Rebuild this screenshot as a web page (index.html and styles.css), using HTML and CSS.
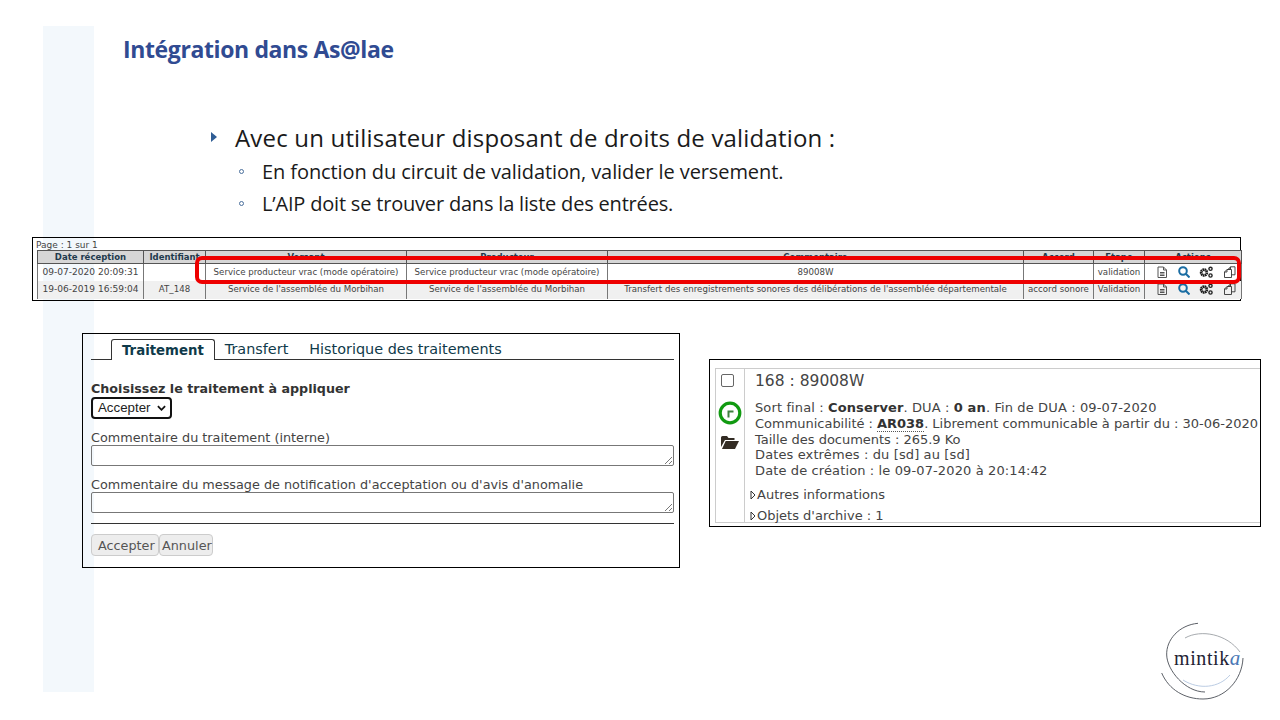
FILE: index.html
```html
<!DOCTYPE html>
<html lang="fr">
<head>
<meta charset="utf-8">
<title>Intégration dans As@lae</title>
<link rel="stylesheet" href="styles.css">
</head>
<body>
<main class="slide">
  <div class="band"></div>
  <h1 class="title">Intégration dans As@lae</h1>
  <section class="bullets">
    <div class="lvl1"><svg class="tri" viewBox="0 0 6 10"><path d="M0 0L6 5L0 10Z"/></svg><span>Avec un utilisateur disposant de droits de validation :</span></div>
    <div class="lvl2"><span class="ring"></span><span>En fonction du circuit de validation, valider le versement.</span></div>
    <div class="lvl2 last"><span class="ring"></span><span>L’AIP doit se trouver dans la liste des entrées.</span></div>
  </section>

  <section class="listing">
    <div class="page">Page : 1 sur 1</div>
    <table class="grid">
      <colgroup>
        <col class="c1"><col class="c2"><col class="c3"><col class="c4"><col class="c5"><col class="c6"><col class="c7"><col class="c8">
      </colgroup>
      <thead>
        <tr><th>Date réception</th><th>Identifiant</th><th>Versant</th><th>Producteur</th><th>Commentaire</th><th>Accord</th><th>Etape</th><th>Actions</th></tr>
      </thead>
      <tbody>
        <tr>
          <td class="when">09-07-2020 20:09:31</td><td></td><td>Service producteur vrac (mode opératoire)</td><td>Service producteur vrac (mode opératoire)</td><td>89008W</td><td></td><td>validation</td>
          <td><div class="acts">
            <svg viewBox="0 0 12 12"><path class="doc" d="M2 1H7.500L10.500 4V11.500H2ZM7.500 1V4H10.500M4 6.500H8.500M4 8H8.500M4 9.500H8.500"/></svg>
            <svg viewBox="0 0 12 12"><circle class="lens" cx="5" cy="5" r="3.800"/><path class="lens" d="M7.800 7.800L11.500 11.500"/></svg>
            <svg class="gears" viewBox="0 0 14 12"><circle class="gear" cx="5" cy="6.500" r="2.800"/><circle class="gear2" cx="11.500" cy="2.800" r="1.600"/><circle class="gear2" cx="11.500" cy="9.500" r="1.600"/></svg>
            <svg class="copies" viewBox="0 0 13 12"><path class="copy" d="M5.500 3.500V3L7.500 0.800H12V8.800H8.500M1.500 6L4 3.500H8.500V11.500H1.500ZM4 3.500V6H1.500M7.500 0.800V3H5.500"/></svg>
          </div></td>
        </tr>
        <tr class="alt">
          <td class="when">19-06-2019 16:59:04</td><td>AT_148</td><td>Service de l'assemblée du Morbihan</td><td>Service de l'assemblée du Morbihan</td><td>Transfert des enregistrements sonores des délibérations de l'assemblée départementale</td><td>accord sonore</td><td>Validation</td>
          <td><div class="acts">
            <svg viewBox="0 0 12 12"><path class="doc" d="M2 1H7.500L10.500 4V11.500H2ZM7.500 1V4H10.500M4 6.500H8.500M4 8H8.500M4 9.500H8.500"/></svg>
            <svg viewBox="0 0 12 12"><circle class="lens" cx="5" cy="5" r="3.800"/><path class="lens" d="M7.800 7.800L11.500 11.500"/></svg>
            <svg class="gears" viewBox="0 0 14 12"><circle class="gear" cx="5" cy="6.500" r="2.800"/><circle class="gear2" cx="11.500" cy="2.800" r="1.600"/><circle class="gear2" cx="11.500" cy="9.500" r="1.600"/></svg>
            <svg class="copies" viewBox="0 0 13 12"><path class="copy" d="M5.500 3.500V3L7.500 0.800H12V8.800H8.500M1.500 6L4 3.500H8.500V11.500H1.500ZM4 3.500V6H1.500M7.500 0.800V3H5.500"/></svg>
          </div></td>
        </tr>
      </tbody>
    </table>
  </section>
  <div class="highlight"></div>

  <section class="form">
    <nav class="tabs">
      <span class="tab active">Traitement</span>
      <span class="tab">Transfert</span>
      <span class="tab">Historique des traitements</span>
    </nav>
    <div class="fields">
      <div class="choose">Choisissez le traitement à appliquer</div>
      <div class="select"><span>Accepter</span><svg viewBox="0 0 10 6"><path d="M1 1L5 5L9 1"/></svg></div>
      <label class="lab">Commentaire du traitement (interne)</label>
      <div class="area"><svg viewBox="0 0 8 8"><path d="M1 8L8 1M5 8L8 5"/></svg></div>
      <label class="lab">Commentaire du message de notification d'acceptation ou d'avis d'anomalie</label>
      <div class="area"><svg viewBox="0 0 8 8"><path d="M1 8L8 1M5 8L8 5"/></svg></div>
    </div>
    <div class="buttons"><span class="btn b1">Accepter</span><span class="btn b2">Annuler</span></div>
  </section>

  <section class="detail">
    <div class="card">
      <aside class="side">
        <span class="check"></span>
        <svg class="stamp" viewBox="0 0 24 24"><circle cx="12" cy="12" r="9.800"/><path d="M10.500 16.500V10.500H15.500"/></svg>
        <svg class="folder" viewBox="0 0 18 14"><path d="M0 2.500Q0 1 1.500 1H6L7.500 3H13.500V5H4L0 12ZM1 14L4.700 6H18L14 14Z"/></svg>
      </aside>
      <div class="info">
        <div class="name">168 : 89008W</div>
        <div class="meta">
          <div>Sort final : <b>Conserver</b>. DUA : <b>0 an</b>. Fin de DUA : 09-07-2020</div>
          <div class="tight">Communicabilité : <b class="dot">AR038</b>. Librement communicable à partir du : 30-06-2020</div>
          <div class="tight">Taille des documents : 265.9 Ko</div>
          <div>Dates extrêmes : du [sd] au [sd]</div>
          <div>Date de création : le 09-07-2020 à 20:14:42</div>
        </div>
        <div class="fold one"><svg viewBox="0 0 6 10"><path d="M1 1L5 5L1 9Z"/></svg>Autres informations</div>
        <div class="fold two"><svg viewBox="0 0 6 10"><path d="M1 1L5 5L1 9Z"/></svg>Objets d'archive : 1</div>
      </div>
    </div>
  </section>

  <div class="logo">
    <svg viewBox="0 0 90 85">
      <path class="a1" d="M37 1.300C18 3 5 18 5.700 33C6 48 24 70 44 70"/>
      <path class="a1" d="M0.700 51C8 68 24 77 42 77C64 77 81 58 82 36"/>
      <path class="a2" d="M24 16C40 7 66 12 79 30"/>
      <path class="a4" d="M22 58C38 68 58 66 69 53"/>
    </svg>
    <span class="word">mintik<i>a</i></span>
  </div>
</main>
</body>
</html>
```
FILE: styles.css
```css
* { box-sizing: border-box; }
html, body { margin: 0; padding: 0; background: #fff; }
.slide { position: relative; width: 1280px; height: 720px; overflow: hidden; background: #fff; font-family: "Open Sans", sans-serif; }
.band { position: absolute; left: 43px; top: 26px; width: 51px; height: 666px; background: #f3f8fc; }
.title { position: absolute; left: 123px; top: 32px; margin: 0; font: 700 23px/34px "Open Sans", sans-serif; letter-spacing: -0.38px; color: #304b92; white-space: nowrap; }

.bullets { position: absolute; left: 211px; top: 120px; color: #1a1a1a; }
.lvl1 { display: flex; align-items: center; height: 36px; padding-bottom: 2px; font-size: 24px; letter-spacing: 0.18px; white-space: nowrap; }
.tri { width: 6px; height: 10px; margin-right: 18px; fill: #2f5d95; }
.lvl2 { display: flex; align-items: center; height: 31px; margin-left: 28px; font-size: 20px; letter-spacing: -0.09px; white-space: nowrap; }
.lvl2.last { margin-top: 1px; letter-spacing: -0.19px; }
.ring { width: 5px; height: 5px; margin-right: 18px; border: 1px solid #4a6f9c; border-radius: 50%; }

.listing { position: absolute; left: 32px; top: 237px; width: 1209px; height: 64px; border: 1px solid #000; border-width: 1.500px 1px; padding: 0 0 0 4px; font-family: "DejaVu Sans", sans-serif; color: #444; }
.page { height: 12px; margin-left: -1px; font-size: 9px; line-height: 14px; }
.grid { width: 1204px; table-layout: fixed; border-collapse: collapse; font-size: 8.650px; }
.c1 { width: 106px; } .c2 { width: 62px; } .c3 { width: 201px; } .c4 { width: 201px; } .c5 { width: 416px; } .c6 { width: 70px; } .c7 { width: 51px; } .c8 { width: 97px; }
.grid th { height: 13px; padding: 0; background: #d6d6d6; border: 1px solid #555; border-width: 1.500px 1px 1px; font-size: 8.500px; font-weight: 700; color: #1f3a4d; line-height: 10px; white-space: nowrap; overflow: hidden; }
.grid td { height: 17px; padding: 0; text-align: center; border-left: 1px solid #777; border-right: 1px solid #777; white-space: nowrap; overflow: hidden; }
.grid td.when { font-size: 9.050px; }
.grid tr.alt td { height: 18px; padding-bottom: 2px; background: #f0f0f0; }
.acts { display: flex; align-items: center; gap: 9.500px; padding-left: 11px; }
.acts svg { flex: none; width: 12px; height: 12px; fill: none; }
.acts .gears { width: 14px; }
.acts .copies { width: 13px; }
.doc { stroke: #555; stroke-width: 1; }
.lens { stroke: #1a6da3; stroke-width: 2; }
.gear { stroke: #1a1a1a; stroke-width: 2.800; stroke-dasharray: 1.500 0.400; }
.gear2 { stroke: #222; stroke-width: 1.400; }
.copy { stroke: #333; stroke-width: 0.900; stroke-linejoin: round; }

.highlight { position: absolute; left: 195px; top: 256px; width: 1046px; height: 28px; border: 4px solid #ee0000; border-radius: 7px; }

.form { position: absolute; left: 82px; top: 333px; width: 598px; height: 235px; border: 1px solid #000; font-family: "DejaVu Sans", sans-serif; font-size: 13px; color: #444; padding: 0 5px 0 8px; }
.tabs { display: flex; align-items: flex-end; height: 26px; padding-left: 20px; border-bottom: 1px solid #333; font-size: 14.400px; }
.tab { margin-right: 21px; padding-top: 1px; line-height: 19px; color: #0f3a4a; }
.tab.active { position: relative; top: 1px; margin-right: 10px; padding: 1px 10px 0; height: 21px; border: 1px solid #333; border-bottom: 0; border-radius: 3px 3px 0 0; background: #fff; font-size: 13.300px; font-weight: 700; }
.fields { padding-top: 20px; }
.choose { height: 17px; font-size: 12.700px; font-weight: 700; color: #333; line-height: 17px; white-space: nowrap; }
.select { display: flex; align-items: center; justify-content: space-between; width: 81px; height: 22px; padding: 0 4px 1px 5px; border: 2px solid #111; border-radius: 4px; font-family: "Liberation Sans", sans-serif; font-size: 13.300px; color: #222; }
.select svg { width: 9px; height: 6px; fill: none; stroke: #111; stroke-width: 2; }
.lab { display: block; height: 15px; margin-top: 11px; font-size: 12.800px; line-height: 15px; white-space: nowrap; }
.area { position: relative; width: 100%; height: 21px; border: 1px solid #777; border-radius: 2px; }
.area svg { position: absolute; right: 1px; bottom: 1px; width: 8px; height: 8px; fill: none; stroke: #555; stroke-width: 0.800; }
.buttons { display: flex; margin-top: 10px; padding-top: 10px; border-top: 1px solid #333; }
.btn { display: block; height: 22px; padding: 0 6px; background: #ededed; border: 1px solid #ccc; border-radius: 4px; font-size: 12.800px; line-height: 22px; color: #555; }
.btn.b1 { width: 68px; }
.btn.b2 { width: 54px; padding: 0 2px; }

.detail { position: absolute; left: 709px; top: 359px; width: 552px; height: 168px; border: 1px solid #000; padding: 8px 0 3px 5px; font-family: "DejaVu Sans", sans-serif; font-size: 13px; color: #444; }
.card { display: flex; height: 100%; border: 1px solid #ccc; border-right: 0; }
.side { display: flex; flex-direction: column; align-items: center; flex: none; width: 29px; border-right: 1px solid #ccc; }
.check { align-self: flex-start; width: 13px; height: 13px; margin: 5px 0 0 5px; border: 1px solid #666; border-radius: 2px; }
.stamp { flex: none; width: 24px; height: 24px; margin-top: 14px; fill: none; stroke: #119a11; stroke-width: 3.200; }
.stamp path { stroke-width: 2; stroke: #3f7f3f; }
.folder { flex: none; width: 18px; height: 14px; margin-top: 10px; fill: #332c24; }
.info { flex: 1; padding-left: 10px; min-width: 0; }
.name { margin-top: 1px; height: 24px; font-size: 15.500px; line-height: 22px; color: #444; }
.meta { margin-top: 6px; line-height: 15.800px; white-space: nowrap; letter-spacing: 0.12px; }
.meta .tight { letter-spacing: -0.02px; }
.meta b { color: #333; }
.dot { border-bottom: 1px dotted #555; }
.fold { display: flex; align-items: center; margin-left: -5px; line-height: 16px; }
.fold svg { flex: none; width: 6px; height: 10px; margin-right: 1px; fill: #fff; stroke: #333; stroke-width: 1; }
.one { margin-top: 8px; }
.two { margin-top: 5px; }

.logo { position: absolute; left: 1161px; top: 622px; width: 90px; height: 85px; }
.logo svg { position: absolute; inset: 0; width: 90px; height: 85px; fill: none; }
.a1 { stroke: #5d6168; stroke-width: 1; }
.a2 { stroke: #8f9499; stroke-width: 0.800; }
.a4 { stroke: #a9bfdc; stroke-width: 0.800; }
.word { position: absolute; left: 13px; top: 23px; font: 20px/26px "Liberation Serif", serif; letter-spacing: 0.6px; color: #223; white-space: nowrap; }
.word i { color: #4a78b5; font-size: 21px; }
```
